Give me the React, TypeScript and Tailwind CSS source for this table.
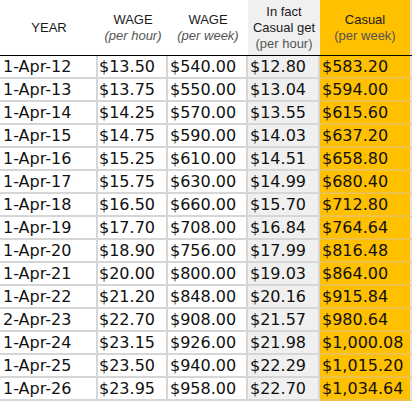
const rows: [string, string, string, string, string][] = [
  ['1-Apr-12', '$13.50', '$540.00', '$12.80', '$583.20'],
  ['1-Apr-13', '$13.75', '$550.00', '$13.04', '$594.00'],
  ['1-Apr-14', '$14.25', '$570.00', '$13.55', '$615.60'],
  ['1-Apr-15', '$14.75', '$590.00', '$14.03', '$637.20'],
  ['1-Apr-16', '$15.25', '$610.00', '$14.51', '$658.80'],
  ['1-Apr-17', '$15.75', '$630.00', '$14.99', '$680.40'],
  ['1-Apr-18', '$16.50', '$660.00', '$15.70', '$712.80'],
  ['1-Apr-19', '$17.70', '$708.00', '$16.84', '$764.64'],
  ['1-Apr-20', '$18.90', '$756.00', '$17.99', '$816.48'],
  ['1-Apr-21', '$20.00', '$800.00', '$19.03', '$864.00'],
  ['1-Apr-22', '$21.20', '$848.00', '$20.16', '$915.84'],
  ['2-Apr-23', '$22.70', '$908.00', '$21.57', '$980.64'],
  ['1-Apr-24', '$23.15', '$926.00', '$21.98', '$1,000.08'],
  ['1-Apr-25', '$23.50', '$940.00', '$22.29', '$1,015.20'],
  ['1-Apr-26', '$23.95', '$958.00', '$22.70', '$1,034.64'],
];

export default function App() {
  return (
    <div className="w-[412px] h-[401px] bg-white overflow-hidden">
      {/* header */}
      <div className="flex h-[56px] border-b border-black font-['Liberation_Sans',Arial,sans-serif] text-[13px] leading-[16px] text-[#1a1a1a]">
        <div className="w-[98px] flex items-center justify-center">YEAR</div>
        <div className="w-[70px] flex flex-col items-center justify-center">
          <span>WAGE</span>
          <span className="italic text-[#555]">(per hour)</span>
        </div>
        <div className="w-[80px] flex flex-col items-center justify-center">
          <span>WAGE</span>
          <span className="italic text-[#555]">(per week)</span>
        </div>
        <div className="w-[72px] bg-[#f0f0f0] flex flex-col items-center justify-center">
          <span>In fact</span>
          <span>Casual get</span>
          <span className="text-[#555]">(per hour)</span>
        </div>
        <div className="w-[90px] bg-[#ffc000] flex flex-col items-center justify-center">
          <span>Casual</span>
          <span className="text-[#555]">(per week)</span>
        </div>
        <div className="w-[2px] bg-[#e4e4e4]" />
      </div>

      {/* rows */}
      <div className="font-['DejaVu_Sans',Verdana,sans-serif] text-[16px] leading-[21px] text-[#111]">
        {rows.map((r) => (
          <div key={r[0] + r[1]} className="flex h-[23px]">
            <div className="w-[98px] pl-[3px] border-b-2 border-r-2 border-[#d6d6d6]">{r[0]}</div>
            <div className="w-[70px] pl-[1px] border-b-2 border-r-2 border-[#d6d6d6]">{r[1]}</div>
            <div className="w-[80px] pl-[2px] border-b-2 border-r-2 border-[#d6d6d6]">{r[2]}</div>
            <div className="w-[72px] pl-[2px] bg-[#f0f0f0] border-b-2 border-r-2 border-[#d6d6d6]">{r[3]}</div>
            <div className="w-[92px] pl-[2px] bg-[#ffc000] border-b-2 border-r-2 border-b-[#edc24a] border-r-[#e4e4e4]">{r[4]}</div>
          </div>
        ))}
      </div>
    </div>
  );
}
